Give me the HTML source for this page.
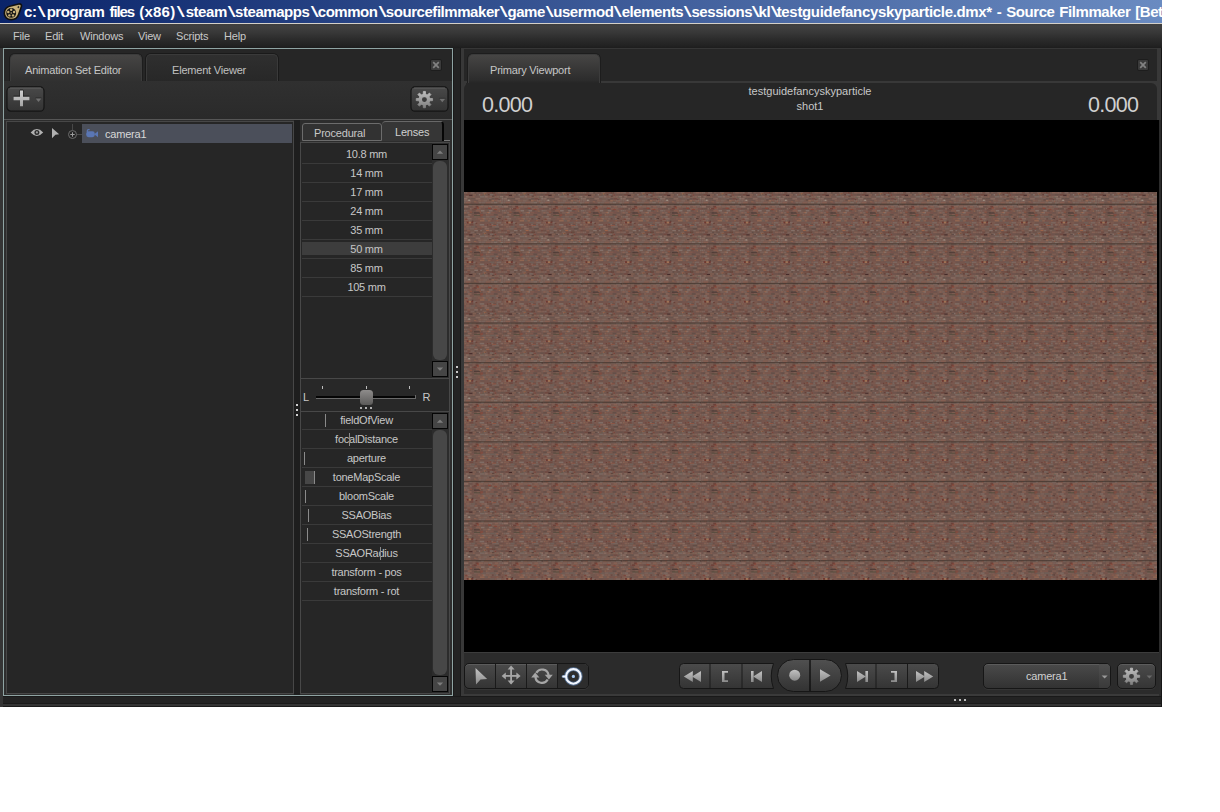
<!DOCTYPE html>
<html><head><meta charset="utf-8"><title>Source Filmmaker</title>
<style>
html,body{margin:0;padding:0;background:#fff;}
body{width:1220px;height:812px;position:relative;overflow:hidden;font-family:"Liberation Sans",sans-serif;font-size:11px;color:#c4c4c4;}
.abs{position:absolute;box-sizing:border-box;}
.bs{display:inline-block;font-weight:normal;transform:translateX(0.4px) scaleX(1.9);margin:0 2.5px 0 2.1px;}
#app{position:absolute;left:0;top:0;width:1162px;height:707px;background:#2b2b2b;overflow:hidden;}
.row{text-align:center;color:#c6c6c6;white-space:nowrap;letter-spacing:-0.25px;}
.t{position:absolute;white-space:nowrap;line-height:14px;letter-spacing:-0.2px;}
.btn{position:absolute;box-sizing:border-box;border:1px solid #161616;border-radius:4px;background:linear-gradient(#4b4b4b,#353535);box-shadow:0 1px 0 rgba(255,255,255,0.05),inset 0 1px 0 rgba(255,255,255,0.10);}
.sb{position:absolute;box-sizing:border-box;width:16px;height:16px;border:1px solid #050505;background:#454545;}
</style></head><body>
<div id="app">
<svg class="abs" style="left:0;top:0" width="1" height="1"><defs><linearGradient id="gg" gradientUnits="userSpaceOnUse" x1="0" y1="-8.500" x2="0" y2="8.500"><stop offset="0" stop-color="#c0c0c0"/><stop offset="1" stop-color="#7e7e7e"/></linearGradient></defs></svg>
<!-- title bar -->
<div class="abs" style="left:0;top:0;width:1162px;height:23px;background:linear-gradient(90deg,#0a246a 0px,#6a8bc1 1162px)"></div>
<div class="abs" id="title" style="left:24px;top:0;width:1138px;height:23px;overflow:hidden;white-space:nowrap;color:#fff;font-weight:bold;font-size:15px;line-height:23px;letter-spacing:-0.45px">c:<span class="bs" style="margin:0 3.5px 0 3px">\</span><span style="word-spacing:1.5px">program <span style="letter-spacing:-1.1px">files</span> </span><span style="letter-spacing:0.2px">(x86)</span><span class="bs" style="margin:0 3.5px 0 3.1px">\</span>steam<span class="bs">\</span>steamapps<span class="bs">\</span>common<span class="bs">\</span>sourcefilmmaker<span class="bs">\</span>game<span class="bs">\</span>usermod<span class="bs">\</span>elements<span class="bs">\</span>sessions<span class="bs" style="margin:0 1.4px">\</span>kl<span class="bs" style="margin:0 1.4px">\</span><span style="letter-spacing:-0.33px">testguidefancyskyparticle.dmx*</span><span style="letter-spacing:-0.45px;word-spacing:1.2px"> - Source Filmmaker [Beta]</span></div>
<svg class="abs" style="left:2.6px;top:3.2px" width="20.5" height="18.3" viewBox="0 0 19 17"><path d="M1.2 9.6C1.2 5.4 4.2 3.2 8 2.6L14.6 0.9C16.6 0.6 17.6 1.9 17 3.4L14.6 10.4C13.6 13.4 11 15.4 7.6 15.4C3.8 15.4 1.2 13 1.2 9.6Z" fill="#c9b27a" stroke="#111" stroke-width="1.5"/><circle cx="7.6" cy="9.2" r="4.6" fill="#151515"/><g fill="#c9b27a"><circle cx="7.6" cy="6.3" r="1.15"/><circle cx="10.3" cy="8.3" r="1.15"/><circle cx="9.3" cy="11.5" r="1.15"/><circle cx="5.9" cy="11.5" r="1.15"/><circle cx="4.9" cy="8.3" r="1.15"/><circle cx="7.6" cy="9.2" r="0.7"/></g><path d="M14.2 2.4l.5 1 .9.3-.9.4-.5 1-.4-1-1-.4 1-.3z" fill="#151515"/></svg>
<div class="abs" style="left:0;top:23px;width:1162px;height:1px;background:#d4d0c8"></div>
<!-- menu bar -->
<div class="abs" style="left:0;top:24px;width:1162px;height:24px;background:linear-gradient(#3e3e3e 0%,#404040 12%,#383838 35%,#2c2c2c 62%,#232323 88%,#1d1d1d 100%)"></div>
<div class="t" style="left:13px;top:29px;color:#c8c8c8">File</div>
<div class="t" style="left:45px;top:29px;color:#c8c8c8">Edit</div>
<div class="t" style="left:80px;top:29px;color:#c8c8c8">Windows</div>
<div class="t" style="left:138px;top:29px;color:#c8c8c8">View</div>
<div class="t" style="left:176px;top:29px;color:#c8c8c8">Scripts</div>
<div class="t" style="left:224px;top:29px;color:#c8c8c8">Help</div>
<!-- outer strips -->
<div class="abs" style="left:0;top:48px;width:3px;height:659px;background:#353535"></div>
<div class="abs" style="left:0;top:696px;width:1162px;height:11px;background:#232323"></div>
<div class="abs" style="left:0;top:696px;width:1162px;height:1px;background:#191919"></div>
<div class="abs" style="left:0;top:703px;width:1162px;height:1px;background:#1b1b1b"></div>
<div class="abs" style="left:0;top:704px;width:1162px;height:2px;background:#343434"></div>
<div class="abs" style="left:0;top:706px;width:1162px;height:1px;background:#1a1a1a"></div>
<div class="abs" style="left:0;top:696px;width:3px;height:11px;background:#353535"></div>
<div class="abs" style="left:954px;top:699px;width:2px;height:2px;background:#bdbdbd;box-shadow:5px 0 0 #bdbdbd,10px 0 0 #bdbdbd"></div>
<!-- gap between panels -->
<div class="abs" style="left:453px;top:48px;width:8px;height:648px;background:#232323;border-left:1px solid #191919;border-right:1px solid #191919"></div>
<div class="abs" style="left:456px;top:366px;width:2px;height:2px;background:#c8c8c8;box-shadow:0 5px 0 #c8c8c8,0 10px 0 #c8c8c8"></div>

<!-- LEFT PANEL -->
<div class="abs" id="lp" style="left:3px;top:48px;width:450px;height:648px;border:1px solid #8fa4a3;background:#2b2b2b"></div>
<div class="abs" style="left:4px;top:49px;width:448px;height:32px;background:#262626"></div>
<div class="abs" style="left:4px;top:119px;width:448px;height:1px;background:#565656"></div>
<div class="abs" style="left:4px;top:120px;width:448px;height:575px;background:#2d2d2d"></div>
<!-- tabs -->
<div class="abs" style="left:10px;top:54px;width:132px;height:29px;border-radius:5px 5px 0 0;background:linear-gradient(#464544,#2f2f2f);border:1px solid #3c3c3c;border-bottom:none;box-shadow:0 0 0 1px #1d1d1d"></div>
<div class="t" id="tab1" style="left:25px;top:63px;color:#c6c6c6">Animation Set Editor</div>
<div class="abs" style="left:146px;top:54px;width:132px;height:29px;border-radius:5px 5px 0 0;background:linear-gradient(#2f2f2f,#272727);border:1px solid #3a3a3a;border-bottom:none;box-shadow:0 0 0 1px #1a1a1a"></div>
<div class="t" id="tab2" style="left:172px;top:63px;color:#c0c0c0">Element Viewer</div>
<div class="abs" style="left:430px;top:59px;width:12px;height:12px;background:#3b3b3b;border:1px solid #1d1d1d;border-radius:2px"></div>
<svg class="abs" style="left:430px;top:59px" width="12" height="12"><path d="M3.2 3.2L8.8 8.8M8.8 3.2L3.2 8.800" stroke="#828282" stroke-width="1.700"/></svg>
<div class="abs" style="left:4px;top:81px;width:448px;height:38px;background:linear-gradient(#303030,#2a2a2a)"></div>
<!-- toolbar buttons -->
<svg class="abs" style="left:4px;top:82px" width="448" height="36" viewBox="4 82 448 36">
<defs><linearGradient id="tb" x1="0" y1="0" x2="0" y2="1"><stop offset="0" stop-color="#4d4d4d"/><stop offset="0.1" stop-color="#474747"/><stop offset="1" stop-color="#333"/></linearGradient>
<linearGradient id="pl" x1="0" y1="0" x2="0" y2="1"><stop offset="0" stop-color="#cfcfcf"/><stop offset="1" stop-color="#a4a4a4"/></linearGradient></defs>
<rect x="7" y="86.900" width="37" height="24.300" rx="4" fill="url(#tb)" stroke="#141414" stroke-width="1.200"/><path d="M10 88H41" stroke="#6a6a6a" stroke-width="0.9" opacity="0.8"/>
<path d="M13.600 96.200H20V90.100H23V96.200H29.400" fill="none" stroke="#1c1c1c" stroke-width="1"/>
<path d="M13.600 96.700H20V90.600H23V96.700H29.400V100.200H23V106.300H20V100.200H13.600Z" fill="url(#pl)"/>
<path d="M35.600 98H41.400" stroke="#222" stroke-width="0.800"/><path d="M35.700 98.400H41.300L38.500 101.900Z" fill="#707070"/>
<rect x="411" y="86.900" width="37" height="24.300" rx="4" fill="url(#tb)" stroke="#141414" stroke-width="1.200"/><path d="M414 88H445" stroke="#6a6a6a" stroke-width="0.9" opacity="0.8"/>
<g transform="translate(424.400,99.600)"><g fill="url(#gg)"><path fill-rule="evenodd" d="M0-5.9A5.9 5.9 0 1 0 0 5.9A5.9 5.9 0 1 0 0-5.9ZM0-2.4A2.4 2.4 0 1 1 0 2.4A2.4 2.4 0 1 1 0-2.400Z"/><path d="M-1.05 -8.15L1.05 -8.15L1.25 -4.60L-1.25 -4.60ZM5.02 -6.51L6.51 -5.02L4.14 -2.37L2.37 -4.14ZM8.15 -1.05L8.15 1.05L4.60 1.25L4.60 -1.25ZM6.51 5.02L5.02 6.51L2.37 4.14L4.14 2.37ZM1.05 8.15L-1.05 8.15L-1.25 4.60L1.25 4.60ZM-5.02 6.51L-6.51 5.02L-4.14 2.37L-2.37 4.14ZM-8.15 1.05L-8.15 -1.05L-4.60 -1.25L-4.60 1.25ZM-6.51 -5.02L-5.02 -6.51L-2.37 -4.14L-4.14 -2.37Z" stroke="url(#gg)" stroke-width="0.8" stroke-linejoin="round"/><circle r="2.4" fill="#3a3a3a" opacity="0.35"/></g></g>
<path d="M439.300 98.400H445.300" stroke="#222" stroke-width="0.800"/><path d="M439.400 98.800H445.200L442.300 102.200Z" fill="#707070"/>
</svg>
<!-- tree -->
<div class="abs" style="left:6px;top:121px;width:288px;height:573px;background:#262626;border:1px solid #474747"></div>
<div class="abs" style="left:82px;top:124px;width:210px;height:19px;background:#4b4f5a"></div>
<div class="t" id="cam1" style="left:105px;top:127px;color:#d8d8d8">camera1</div>
<svg class="abs" style="left:28px;top:124px" width="75" height="19">
<path d="M2.600 8.500Q8.900 1.700 15.200 8.500Q8.900 15.300 2.600 8.500Z" fill="#b2b2b2"/><circle cx="8.900" cy="8.400" r="2.500" fill="#2c2c2c"/><circle cx="8.900" cy="8.400" r="1.100" fill="#9c9c9c"/>
<path d="M24 4V14.200L27.400 10.800L31.200 10.300Z" fill="#b0b0b0"/>
<path d="M44.500 0V6M49 10.500H54" stroke="#484848" stroke-width="1"/><circle cx="44.500" cy="10.500" r="4" fill="#262626" stroke="#6c6c6c" stroke-width="1"/><path d="M42.300 10.500H46.700M44.500 8.300V12.700" stroke="#a0a0a0" stroke-width="1"/>
<rect x="58.200" y="7.300" width="8.600" height="5.900" rx="2.400" fill="#5a76b4"/><path d="M66.200 10.300L70 7.200V13.300Z" fill="#5a76b4"/><path d="M59.300 8V6.800Q59.300 5.600 60.500 5.600H61.600" fill="none" stroke="#5a76b4" stroke-width="1.200"/>
</svg>
<!-- splitter between tree and sub panel -->
<div class="abs" style="left:294px;top:120px;width:6px;height:575px;background:#1e1e1e"></div>
<div class="abs" style="left:296px;top:404px;width:2px;height:2px;background:#cfcfcf;box-shadow:0 5px 0 #cfcfcf,0 10px 0 #cfcfcf"></div>
<!-- sub panel -->
<div class="abs" style="left:300px;top:120px;width:150px;height:575px;background:#2d2d2d"></div>
<div class="abs" style="left:302px;top:123px;width:80px;height:18px;background:#323232;border:1px solid #6c6c6c;border-radius:3px 3px 0 0"></div>
<div class="abs" style="left:382px;top:121px;width:62px;height:20px;background:#363636;border-top:1px solid #686868;border-right:2px solid #060606;border-radius:4px 4px 0 0"></div>
<div class="abs" style="left:444px;top:140px;width:6px;height:1px;background:#777"></div>
<div class="t" id="proc" style="left:314px;top:126px;color:#c8c8c8">Procedural</div>
<div class="t" id="lens" style="left:395px;top:125px;color:#d0d0d0">Lenses</div>
<!-- lens list -->
<div class="abs" style="left:300px;top:142px;width:150px;height:237px;background:#262626;border:1px solid #484848"></div>
<div class="abs row" style="left:301px;top:144px;width:131px;height:19px;line-height:20px">10.8 mm</div><div class="abs" style="left:302px;top:163px;width:130px;height:1px;background:#3a3a3a"></div><div class="abs row" style="left:301px;top:163px;width:131px;height:19px;line-height:20px">14 mm</div><div class="abs" style="left:302px;top:182px;width:130px;height:1px;background:#3a3a3a"></div><div class="abs row" style="left:301px;top:182px;width:131px;height:19px;line-height:20px">17 mm</div><div class="abs" style="left:302px;top:201px;width:130px;height:1px;background:#3a3a3a"></div><div class="abs row" style="left:301px;top:201px;width:131px;height:19px;line-height:20px">24 mm</div><div class="abs" style="left:302px;top:220px;width:130px;height:1px;background:#3a3a3a"></div><div class="abs row" style="left:301px;top:220px;width:131px;height:19px;line-height:20px">35 mm</div><div class="abs" style="left:302px;top:239px;width:130px;height:1px;background:#3a3a3a"></div><div class="abs" style="left:302px;top:242px;width:130px;height:13px;background:#3d3d3d"></div><div class="abs row" style="left:301px;top:239px;width:131px;height:19px;line-height:20px">50 mm</div><div class="abs" style="left:302px;top:258px;width:130px;height:1px;background:#3a3a3a"></div><div class="abs row" style="left:301px;top:258px;width:131px;height:19px;line-height:20px">85 mm</div><div class="abs" style="left:302px;top:277px;width:130px;height:1px;background:#3a3a3a"></div><div class="abs row" style="left:301px;top:277px;width:131px;height:19px;line-height:20px">105 mm</div><div class="abs" style="left:302px;top:296px;width:130px;height:1px;background:#3a3a3a"></div>
<div class="abs" style="left:432px;top:143px;width:17px;height:235px;background:#2c2c2c"></div>
<div class="abs" style="left:433px;top:161px;width:14px;height:199px;background:#474747;border-radius:6px"></div>
<div class="sb" style="left:432px;top:144px"></div><svg class="abs" style="left:432px;top:144px" width="16" height="16"><path d="M4.800 9.800L8 6.600L11.200 9.800Z" fill="#7c7c7c"/></svg>
<div class="sb" style="left:432px;top:361px"></div><svg class="abs" style="left:432px;top:361px" width="16" height="16"><path d="M4.800 6.600L8 9.800L11.200 6.600Z" fill="#7c7c7c"/></svg>
<!-- slider -->
<div class="abs" style="left:300px;top:379px;width:150px;height:32px;background:#282828;border-left:1px solid #484848;border-right:1px solid #484848"></div>
<div class="t" style="left:303px;top:389.5px;color:#c8c8c8">L</div>
<div class="t" style="left:422.500px;top:389.5px;color:#c8c8c8">R</div>
<div class="abs" style="left:316px;top:396px;width:100px;height:2px;background:#050505"></div>
<div class="abs" style="left:316px;top:398px;width:100px;height:1px;background:#6a6a6a"></div>
<div class="abs" style="left:415px;top:395px;width:1px;height:4px;background:#6a6a6a"></div>
<div class="abs" style="left:322px;top:386px;width:1px;height:3px;background:#bdbdbd;box-shadow:44px 0 0 #bdbdbd,87px 0 0 #bdbdbd"></div>
<div class="abs" style="left:360px;top:390px;width:13px;height:15px;border-radius:3.500px;background:linear-gradient(#8e8c8b,#5c5b5a)"></div>
<div class="abs" style="left:360px;top:407px;width:2px;height:2px;background:#b0b0b0;box-shadow:5px 0 0 #b0b0b0,10px 0 0 #b0b0b0"></div>
<!-- control list -->
<div class="abs" style="left:300px;top:411px;width:150px;height:283px;background:#262626;border:1px solid #484848"></div>
<div class="abs row" style="left:301px;top:411px;width:131px;height:19px;line-height:19px">fieldOfView</div><div class="abs" style="left:325px;top:414px;width:1px;height:13px;background:#8a8a8a"></div><div class="abs" style="left:302px;top:429px;width:130px;height:1px;background:#3a3a3a"></div><div class="abs row" style="left:301px;top:430px;width:131px;height:19px;line-height:19px">focalDistance</div><div class="abs" style="left:348.5px;top:433px;width:1px;height:13px;background:#8a8a8a"></div><div class="abs" style="left:302px;top:448px;width:130px;height:1px;background:#3a3a3a"></div><div class="abs row" style="left:301px;top:449px;width:131px;height:19px;line-height:19px">aperture</div><div class="abs" style="left:304px;top:452px;width:1px;height:13px;background:#8a8a8a"></div><div class="abs" style="left:302px;top:467px;width:130px;height:1px;background:#3a3a3a"></div><div class="abs" style="left:305px;top:471px;width:9px;height:13px;background:#474747"></div><div class="abs row" style="left:301px;top:468px;width:131px;height:19px;line-height:19px">toneMapScale</div><div class="abs" style="left:314px;top:471px;width:1px;height:13px;background:#8a8a8a"></div><div class="abs" style="left:302px;top:486px;width:130px;height:1px;background:#3a3a3a"></div><div class="abs row" style="left:301px;top:487px;width:131px;height:19px;line-height:19px">bloomScale</div><div class="abs" style="left:305px;top:490px;width:1px;height:13px;background:#8a8a8a"></div><div class="abs" style="left:302px;top:505px;width:130px;height:1px;background:#3a3a3a"></div><div class="abs row" style="left:301px;top:506px;width:131px;height:19px;line-height:19px">SSAOBias</div><div class="abs" style="left:308px;top:509px;width:1px;height:13px;background:#8a8a8a"></div><div class="abs" style="left:302px;top:524px;width:130px;height:1px;background:#3a3a3a"></div><div class="abs row" style="left:301px;top:525px;width:131px;height:19px;line-height:19px">SSAOStrength</div><div class="abs" style="left:307px;top:528px;width:1px;height:13px;background:#8a8a8a"></div><div class="abs" style="left:302px;top:543px;width:130px;height:1px;background:#3a3a3a"></div><div class="abs row" style="left:301px;top:544px;width:131px;height:19px;line-height:19px">SSAORadius</div><div class="abs" style="left:380px;top:547px;width:1px;height:13px;background:#8a8a8a"></div><div class="abs" style="left:302px;top:562px;width:130px;height:1px;background:#3a3a3a"></div><div class="abs row" style="left:301px;top:563px;width:131px;height:19px;line-height:19px">transform - pos</div><div class="abs" style="left:302px;top:581px;width:130px;height:1px;background:#3a3a3a"></div><div class="abs row" style="left:301px;top:582px;width:131px;height:19px;line-height:19px">transform - rot</div><div class="abs" style="left:302px;top:600px;width:130px;height:1px;background:#3a3a3a"></div>
<div class="abs" style="left:432px;top:412px;width:17px;height:281px;background:#2c2c2c"></div>
<div class="abs" style="left:433px;top:430px;width:14px;height:245px;background:#474747;border-radius:6px"></div>
<div class="sb" style="left:432px;top:413px"></div><svg class="abs" style="left:432px;top:413px" width="16" height="16"><path d="M4.800 9.800L8 6.600L11.200 9.800Z" fill="#7c7c7c"/></svg>
<div class="sb" style="left:432px;top:676px"></div><svg class="abs" style="left:432px;top:676px" width="16" height="16"><path d="M4.800 6.600L8 9.800L11.200 6.600Z" fill="#7c7c7c"/></svg>

<!-- RIGHT PANEL -->
<div class="abs" style="left:461px;top:48px;width:701px;height:648px;background:#262626"></div>
<div class="abs" style="left:461px;top:48px;width:3px;height:648px;background:#383838"></div>
<div class="abs" style="left:461px;top:48px;width:701px;height:1px;background:#363636"></div>
<div class="abs" style="left:1157px;top:48px;width:5px;height:648px;background:#2c2c2c"></div>
<div class="abs" style="left:1157px;top:48px;width:4px;height:72px;background:#383838"></div>
<div class="abs" style="left:1161px;top:48px;width:1px;height:659px;background:#161616"></div>
<div class="abs" style="left:461px;top:694px;width:698px;height:2px;background:#3a3a3a"></div>
<!-- tab -->
<div class="abs" style="left:1137px;top:59px;width:12px;height:12px;background:#3b3b3b;border:1px solid #1d1d1d;border-radius:2px"></div>
<svg class="abs" style="left:1137px;top:59px" width="12" height="12"><path d="M3.2 3.2L8.8 8.8M8.8 3.2L3.2 8.800" stroke="#828282" stroke-width="1.700"/></svg>
<div class="abs" style="left:464px;top:81px;width:693px;height:9px;background:#383838"></div>
<div class="abs" style="left:464px;top:83px;width:693px;height:37px;background:#262626;border-radius:6px 6px 0 0"></div>
<div class="abs" style="left:468px;top:54px;width:132px;height:29px;border-radius:5px 5px 0 0;background:linear-gradient(#464544,#2c2c2c 90%,#262626);border:1px solid #3c3c3c;border-bottom:none;box-shadow:0 0 0 1px #1d1d1d"></div>
<div class="abs" style="left:466px;top:83px;width:136px;height:2px;background:#262626"></div>
<div class="t" id="pv" style="left:490px;top:63px;color:#c6c6c6">Primary Viewport</div>
<div class="t" id="tc1" style="left:482px;top:93px;font-size:21.5px;line-height:24px;color:#d0d0d0;letter-spacing:-0.7px">0.000</div>
<div class="t" id="tc2" style="left:1088px;top:93px;font-size:21.5px;line-height:24px;color:#d0d0d0;letter-spacing:-0.7px">0.000</div>
<div class="t" id="sh1" style="left:710px;width:200px;text-align:center;top:84px;color:#c8c8c8;letter-spacing:0">testguidefancyskyparticle</div>
<div class="t" id="sh2" style="left:710px;width:200px;text-align:center;top:99px;color:#c8c8c8;letter-spacing:0">shot1</div>
<!-- viewport -->
<div class="abs" style="left:464px;top:120px;width:695px;height:532px;background:#000"></div>
<svg class="abs" style="left:464px;top:192px" width="693" height="388" viewBox="0 0 693 388">
<defs><g id="bt"><rect x="0" y="0" width="39.800000000000004" height="39.800000000000004" fill="#74584f"/><rect x="0.0" y="0.0" width="1.3" height="1.5" fill="#94766a" opacity="0.35"/><rect x="1.7" y="0.0" width="1.6" height="1.5" fill="#897870" opacity="0.35"/><rect x="3.7" y="0.0" width="2.6" height="1.5" fill="#6a3a32" opacity="0.35"/><rect x="6.7" y="0.0" width="3.6" height="1.5" fill="#84746e" opacity="0.35"/><rect x="10.7" y="0.0" width="1.6" height="1.5" fill="#5a4943" opacity="0.75"/><rect x="12.7" y="0.0" width="1.6" height="1.5" fill="#6e584f" opacity="0.35"/><rect x="14.7" y="0.0" width="3.6" height="1.5" fill="#5a4943" opacity="0.35"/><rect x="18.7" y="0.0" width="3.6" height="1.5" fill="#7e675e" opacity="0.5"/><rect x="22.7" y="0.0" width="4.6" height="1.5" fill="#6a3a32" opacity="0.35"/><rect x="27.7" y="0.0" width="3.6" height="1.5" fill="#6a3a32" opacity="0.75"/><rect x="31.7" y="0.0" width="1.6" height="1.5" fill="#6e584f" opacity="0.35"/><rect x="33.7" y="0.0" width="3.6" height="1.5" fill="#8e6657" opacity="0.6"/><rect x="37.7" y="0.0" width="1.9" height="1.5" fill="#8e6657" opacity="0.35"/><rect x="0.0" y="2.0" width="1.3" height="1.5" fill="#5d433d" opacity="0.35"/><rect x="1.7" y="2.0" width="3.6" height="1.5" fill="#6a3a32" opacity="0.5"/><rect x="5.7" y="2.0" width="2.6" height="1.5" fill="#7e675e" opacity="0.35"/><rect x="8.7" y="2.0" width="3.6" height="1.5" fill="#876354" opacity="0.5"/><rect x="12.7" y="2.0" width="3.6" height="1.5" fill="#897870" opacity="0.75"/><rect x="16.7" y="2.0" width="2.6" height="1.5" fill="#7e574b" opacity="0.75"/><rect x="19.7" y="2.0" width="2.6" height="1.5" fill="#7a6c66" opacity="0.5"/><rect x="22.7" y="2.0" width="2.6" height="1.5" fill="#6e584f" opacity="0.35"/><rect x="25.7" y="2.0" width="3.6" height="1.5" fill="#7a6c66" opacity="0.75"/><rect x="29.7" y="2.0" width="2.6" height="1.5" fill="#7e574b" opacity="0.6"/><rect x="32.7" y="2.0" width="3.6" height="1.5" fill="#684e47" opacity="0.35"/><rect x="36.7" y="2.0" width="2.9" height="1.5" fill="#5a4943" opacity="0.5"/><rect x="0.0" y="4.0" width="1.6" height="1.5" fill="#684e47" opacity="0.6"/><rect x="2.0" y="4.0" width="2.6" height="1.5" fill="#876c60" opacity="0.75"/><rect x="5.0" y="4.0" width="3.6" height="1.5" fill="#7e574b" opacity="0.35"/><rect x="9.0" y="4.0" width="1.6" height="1.5" fill="#8a5c4d" opacity="0.75"/><rect x="11.0" y="4.0" width="4.6" height="1.5" fill="#684e47" opacity="0.35"/><rect x="16.0" y="4.0" width="4.6" height="1.5" fill="#7a6c66" opacity="0.75"/><rect x="21.0" y="4.0" width="2.6" height="1.5" fill="#94766a" opacity="0.6"/><rect x="24.0" y="4.0" width="1.6" height="1.5" fill="#7e574b" opacity="0.6"/><rect x="26.0" y="4.0" width="2.6" height="1.5" fill="#9a6a52" opacity="0.35"/><rect x="29.0" y="4.0" width="3.6" height="1.5" fill="#876354" opacity="0.5"/><rect x="33.0" y="4.0" width="2.6" height="1.5" fill="#8e6657" opacity="0.5"/><rect x="36.0" y="4.0" width="3.6" height="1.5" fill="#94766a" opacity="0.75"/><rect x="0.0" y="6.0" width="3.3" height="1.5" fill="#94766a" opacity="0.6"/><rect x="3.7" y="6.0" width="2.6" height="1.5" fill="#5a4943" opacity="0.6"/><rect x="6.7" y="6.0" width="4.6" height="1.5" fill="#5a4943" opacity="0.6"/><rect x="11.7" y="6.0" width="4.6" height="1.5" fill="#94766a" opacity="0.5"/><rect x="16.7" y="6.0" width="2.6" height="1.5" fill="#684e47" opacity="0.5"/><rect x="19.7" y="6.0" width="2.6" height="1.5" fill="#6e584f" opacity="0.5"/><rect x="22.7" y="6.0" width="1.6" height="1.5" fill="#6c615b" opacity="0.5"/><rect x="24.7" y="6.0" width="2.6" height="1.5" fill="#7a6c66" opacity="0.35"/><rect x="27.7" y="6.0" width="2.6" height="1.5" fill="#5a4943" opacity="0.6"/><rect x="30.7" y="6.0" width="3.6" height="1.5" fill="#6a3a32" opacity="0.6"/><rect x="34.7" y="6.0" width="2.6" height="1.5" fill="#784f47" opacity="0.35"/><rect x="37.7" y="6.0" width="1.9" height="1.5" fill="#897870" opacity="0.75"/><rect x="0.0" y="8.0" width="2.0" height="1.5" fill="#7e675e" opacity="0.75"/><rect x="2.4" y="8.0" width="4.6" height="1.5" fill="#94766a" opacity="0.35"/><rect x="7.4" y="8.0" width="2.6" height="1.5" fill="#684e47" opacity="0.5"/><rect x="10.4" y="8.0" width="3.6" height="1.5" fill="#5d433d" opacity="0.35"/><rect x="14.4" y="8.0" width="2.6" height="1.5" fill="#9a6a52" opacity="0.35"/><rect x="17.4" y="8.0" width="1.6" height="1.5" fill="#82584c" opacity="0.5"/><rect x="19.4" y="8.0" width="3.6" height="1.5" fill="#7e675e" opacity="0.6"/><rect x="23.4" y="8.0" width="3.6" height="1.5" fill="#82584c" opacity="0.35"/><rect x="27.4" y="8.0" width="2.6" height="1.5" fill="#9a6a52" opacity="0.75"/><rect x="30.4" y="8.0" width="2.6" height="1.5" fill="#8a5c4d" opacity="0.6"/><rect x="33.4" y="8.0" width="3.6" height="1.5" fill="#876c60" opacity="0.75"/><rect x="37.4" y="8.0" width="1.6" height="1.5" fill="#7e675e" opacity="0.75"/><rect x="0.0" y="10.0" width="1.4" height="1.5" fill="#7e675e" opacity="0.6"/><rect x="1.8" y="10.0" width="4.6" height="1.5" fill="#8a5c4d" opacity="0.75"/><rect x="6.8" y="10.0" width="4.6" height="1.5" fill="#5d433d" opacity="0.35"/><rect x="11.8" y="10.0" width="2.6" height="1.5" fill="#784f47" opacity="0.6"/><rect x="14.8" y="10.0" width="2.6" height="1.5" fill="#897870" opacity="0.35"/><rect x="17.8" y="10.0" width="3.6" height="1.5" fill="#7a6c66" opacity="0.35"/><rect x="21.8" y="10.0" width="4.6" height="1.5" fill="#8a5c4d" opacity="0.6"/><rect x="26.8" y="10.0" width="2.6" height="1.5" fill="#876c60" opacity="0.5"/><rect x="29.8" y="10.0" width="3.6" height="1.5" fill="#897870" opacity="0.6"/><rect x="33.8" y="10.0" width="4.6" height="1.5" fill="#6e584f" opacity="0.5"/><rect x="38.8" y="10.0" width="0.8" height="1.5" fill="#94766a" opacity="0.5"/><rect x="0.0" y="12.0" width="2.8" height="1.5" fill="#876c60" opacity="0.35"/><rect x="3.2" y="12.0" width="1.6" height="1.5" fill="#8a5c4d" opacity="0.75"/><rect x="5.2" y="12.0" width="2.6" height="1.5" fill="#84746e" opacity="0.6"/><rect x="8.2" y="12.0" width="3.6" height="1.5" fill="#876c60" opacity="0.6"/><rect x="12.2" y="12.0" width="1.6" height="1.5" fill="#6e584f" opacity="0.35"/><rect x="14.2" y="12.0" width="2.6" height="1.5" fill="#6c615b" opacity="0.5"/><rect x="17.2" y="12.0" width="2.6" height="1.5" fill="#84746e" opacity="0.75"/><rect x="20.2" y="12.0" width="3.6" height="1.5" fill="#9a6a52" opacity="0.35"/><rect x="24.2" y="12.0" width="3.6" height="1.5" fill="#876c60" opacity="0.35"/><rect x="28.2" y="12.0" width="4.6" height="1.5" fill="#7e675e" opacity="0.75"/><rect x="33.2" y="12.0" width="4.6" height="1.5" fill="#84746e" opacity="0.75"/><rect x="38.2" y="12.0" width="1.4" height="1.5" fill="#5a4943" opacity="0.6"/><rect x="0.0" y="14.0" width="4.3" height="1.5" fill="#94766a" opacity="0.75"/><rect x="4.7" y="14.0" width="3.6" height="1.5" fill="#684e47" opacity="0.5"/><rect x="8.7" y="14.0" width="2.6" height="1.5" fill="#8e6657" opacity="0.35"/><rect x="11.7" y="14.0" width="2.6" height="1.5" fill="#6a3a32" opacity="0.75"/><rect x="14.7" y="14.0" width="4.6" height="1.5" fill="#8e6657" opacity="0.75"/><rect x="19.7" y="14.0" width="4.6" height="1.5" fill="#876c60" opacity="0.5"/><rect x="24.7" y="14.0" width="3.6" height="1.5" fill="#897870" opacity="0.5"/><rect x="28.7" y="14.0" width="1.6" height="1.5" fill="#82584c" opacity="0.35"/><rect x="30.7" y="14.0" width="3.6" height="1.5" fill="#8e6657" opacity="0.75"/><rect x="34.7" y="14.0" width="2.6" height="1.5" fill="#84746e" opacity="0.35"/><rect x="37.7" y="14.0" width="1.9" height="1.5" fill="#84746e" opacity="0.6"/><rect x="0.0" y="16.0" width="1.6" height="1.5" fill="#654740" opacity="0.6"/><rect x="2.0" y="16.0" width="3.6" height="1.5" fill="#5a4943" opacity="0.5"/><rect x="6.0" y="16.0" width="1.6" height="1.5" fill="#876c60" opacity="0.75"/><rect x="8.0" y="16.0" width="4.6" height="1.5" fill="#6a3a32" opacity="0.75"/><rect x="13.0" y="16.0" width="3.6" height="1.5" fill="#8e6657" opacity="0.5"/><rect x="17.0" y="16.0" width="3.6" height="1.5" fill="#784f47" opacity="0.35"/><rect x="21.0" y="16.0" width="3.6" height="1.5" fill="#5d433d" opacity="0.35"/><rect x="25.0" y="16.0" width="2.6" height="1.5" fill="#5d433d" opacity="0.5"/><rect x="28.0" y="16.0" width="3.6" height="1.5" fill="#9a6a52" opacity="0.35"/><rect x="32.0" y="16.0" width="3.6" height="1.5" fill="#876354" opacity="0.6"/><rect x="36.0" y="16.0" width="3.6" height="1.5" fill="#784f47" opacity="0.75"/><rect x="0.0" y="18.0" width="1.5" height="1.5" fill="#84746e" opacity="0.6"/><rect x="1.9" y="18.0" width="1.6" height="1.5" fill="#7e675e" opacity="0.75"/><rect x="3.9" y="18.0" width="3.6" height="1.5" fill="#82584c" opacity="0.35"/><rect x="7.9" y="18.0" width="3.6" height="1.5" fill="#654740" opacity="0.5"/><rect x="11.9" y="18.0" width="4.6" height="1.5" fill="#8a5c4d" opacity="0.75"/><rect x="16.9" y="18.0" width="3.6" height="1.5" fill="#897870" opacity="0.75"/><rect x="20.9" y="18.0" width="3.6" height="1.5" fill="#6e584f" opacity="0.6"/><rect x="24.9" y="18.0" width="3.6" height="1.5" fill="#84746e" opacity="0.75"/><rect x="28.9" y="18.0" width="2.6" height="1.5" fill="#5a4943" opacity="0.35"/><rect x="31.9" y="18.0" width="3.6" height="1.5" fill="#7e574b" opacity="0.6"/><rect x="35.9" y="18.0" width="1.6" height="1.5" fill="#6e584f" opacity="0.75"/><rect x="37.9" y="18.0" width="1.6" height="1.5" fill="#84746e" opacity="0.6"/><rect x="0.0" y="20.0" width="2.5" height="1.5" fill="#8e6657" opacity="0.75"/><rect x="2.9" y="20.0" width="2.6" height="1.5" fill="#7e675e" opacity="0.75"/><rect x="5.9" y="20.0" width="3.6" height="1.5" fill="#5d433d" opacity="0.5"/><rect x="9.9" y="20.0" width="2.6" height="1.5" fill="#5a4943" opacity="0.75"/><rect x="12.9" y="20.0" width="2.6" height="1.5" fill="#5a4943" opacity="0.5"/><rect x="15.9" y="20.0" width="2.6" height="1.5" fill="#654740" opacity="0.35"/><rect x="18.9" y="20.0" width="4.6" height="1.5" fill="#876c60" opacity="0.35"/><rect x="23.9" y="20.0" width="2.6" height="1.5" fill="#897870" opacity="0.75"/><rect x="26.9" y="20.0" width="3.6" height="1.5" fill="#82584c" opacity="0.75"/><rect x="30.9" y="20.0" width="2.6" height="1.5" fill="#784f47" opacity="0.6"/><rect x="33.9" y="20.0" width="3.6" height="1.5" fill="#684e47" opacity="0.35"/><rect x="37.9" y="20.0" width="1.7" height="1.5" fill="#7e675e" opacity="0.35"/><rect x="0.0" y="22.0" width="0.5" height="1.5" fill="#5d433d" opacity="0.6"/><rect x="0.9" y="22.0" width="2.6" height="1.5" fill="#5a4943" opacity="0.6"/><rect x="3.9" y="22.0" width="3.6" height="1.5" fill="#8e6657" opacity="0.75"/><rect x="7.9" y="22.0" width="4.6" height="1.5" fill="#654740" opacity="0.35"/><rect x="12.9" y="22.0" width="2.6" height="1.5" fill="#876354" opacity="0.5"/><rect x="15.9" y="22.0" width="3.6" height="1.5" fill="#684e47" opacity="0.6"/><rect x="19.9" y="22.0" width="1.6" height="1.5" fill="#684e47" opacity="0.6"/><rect x="21.9" y="22.0" width="1.6" height="1.5" fill="#9a6a52" opacity="0.5"/><rect x="23.9" y="22.0" width="1.6" height="1.5" fill="#8a5c4d" opacity="0.35"/><rect x="25.9" y="22.0" width="3.6" height="1.5" fill="#82584c" opacity="0.6"/><rect x="29.9" y="22.0" width="3.6" height="1.5" fill="#5a4943" opacity="0.6"/><rect x="33.9" y="22.0" width="3.6" height="1.5" fill="#8e6657" opacity="0.35"/><rect x="37.9" y="22.0" width="1.7" height="1.5" fill="#6e584f" opacity="0.35"/><rect x="0.0" y="24.0" width="1.7" height="1.5" fill="#7a6c66" opacity="0.6"/><rect x="2.1" y="24.0" width="3.6" height="1.5" fill="#84746e" opacity="0.6"/><rect x="6.1" y="24.0" width="3.6" height="1.5" fill="#784f47" opacity="0.5"/><rect x="10.1" y="24.0" width="2.6" height="1.5" fill="#876c60" opacity="0.35"/><rect x="13.1" y="24.0" width="2.6" height="1.5" fill="#876354" opacity="0.35"/><rect x="16.1" y="24.0" width="1.6" height="1.5" fill="#784f47" opacity="0.5"/><rect x="18.1" y="24.0" width="3.6" height="1.5" fill="#6c615b" opacity="0.5"/><rect x="22.1" y="24.0" width="3.6" height="1.5" fill="#7e675e" opacity="0.75"/><rect x="26.1" y="24.0" width="4.6" height="1.5" fill="#6c615b" opacity="0.75"/><rect x="31.1" y="24.0" width="3.6" height="1.5" fill="#7a6c66" opacity="0.5"/><rect x="35.1" y="24.0" width="2.6" height="1.5" fill="#654740" opacity="0.5"/><rect x="38.1" y="24.0" width="1.5" height="1.5" fill="#8e6657" opacity="0.75"/><rect x="0.0" y="26.0" width="2.6" height="1.5" fill="#876354" opacity="0.35"/><rect x="3.0" y="26.0" width="4.6" height="1.5" fill="#94766a" opacity="0.6"/><rect x="8.0" y="26.0" width="3.6" height="1.5" fill="#6e584f" opacity="0.6"/><rect x="12.0" y="26.0" width="1.6" height="1.5" fill="#7e574b" opacity="0.5"/><rect x="14.0" y="26.0" width="2.6" height="1.5" fill="#8a5c4d" opacity="0.75"/><rect x="17.0" y="26.0" width="1.6" height="1.5" fill="#8a5c4d" opacity="0.6"/><rect x="19.0" y="26.0" width="2.6" height="1.5" fill="#897870" opacity="0.6"/><rect x="22.0" y="26.0" width="2.6" height="1.5" fill="#876354" opacity="0.6"/><rect x="25.0" y="26.0" width="2.6" height="1.5" fill="#876c60" opacity="0.5"/><rect x="28.0" y="26.0" width="1.6" height="1.5" fill="#654740" opacity="0.75"/><rect x="30.0" y="26.0" width="1.6" height="1.5" fill="#6c615b" opacity="0.6"/><rect x="32.0" y="26.0" width="3.6" height="1.5" fill="#84746e" opacity="0.5"/><rect x="36.0" y="26.0" width="3.6" height="1.5" fill="#82584c" opacity="0.35"/><rect x="0.0" y="28.0" width="0.5" height="1.5" fill="#8e6657" opacity="0.75"/><rect x="0.9" y="28.0" width="3.6" height="1.5" fill="#876354" opacity="0.75"/><rect x="4.9" y="28.0" width="1.6" height="1.5" fill="#7a6c66" opacity="0.6"/><rect x="6.9" y="28.0" width="4.6" height="1.5" fill="#6e584f" opacity="0.35"/><rect x="11.9" y="28.0" width="3.6" height="1.5" fill="#784f47" opacity="0.5"/><rect x="15.9" y="28.0" width="4.6" height="1.5" fill="#9a6a52" opacity="0.75"/><rect x="20.9" y="28.0" width="2.6" height="1.5" fill="#6c615b" opacity="0.5"/><rect x="23.9" y="28.0" width="2.6" height="1.5" fill="#9a6a52" opacity="0.5"/><rect x="26.9" y="28.0" width="1.6" height="1.5" fill="#784f47" opacity="0.75"/><rect x="28.9" y="28.0" width="4.6" height="1.5" fill="#784f47" opacity="0.5"/><rect x="33.9" y="28.0" width="3.6" height="1.5" fill="#784f47" opacity="0.35"/><rect x="37.9" y="28.0" width="1.7" height="1.5" fill="#6a3a32" opacity="0.5"/><rect x="0.0" y="30.0" width="1.3" height="1.5" fill="#8e6657" opacity="0.6"/><rect x="1.7" y="30.0" width="1.6" height="1.5" fill="#94766a" opacity="0.75"/><rect x="3.7" y="30.0" width="3.6" height="1.5" fill="#876354" opacity="0.35"/><rect x="7.7" y="30.0" width="4.6" height="1.5" fill="#897870" opacity="0.5"/><rect x="12.7" y="30.0" width="3.6" height="1.5" fill="#8a5c4d" opacity="0.35"/><rect x="16.7" y="30.0" width="3.6" height="1.5" fill="#684e47" opacity="0.35"/><rect x="20.7" y="30.0" width="4.6" height="1.5" fill="#784f47" opacity="0.35"/><rect x="25.7" y="30.0" width="4.6" height="1.5" fill="#6c615b" opacity="0.6"/><rect x="30.7" y="30.0" width="1.6" height="1.5" fill="#8a5c4d" opacity="0.5"/><rect x="32.7" y="30.0" width="4.6" height="1.5" fill="#84746e" opacity="0.5"/><rect x="37.7" y="30.0" width="1.9" height="1.5" fill="#7e574b" opacity="0.75"/><rect x="0.6" y="32.0" width="1.6" height="1.5" fill="#9a6a52" opacity="0.5"/><rect x="2.6" y="32.0" width="2.6" height="1.5" fill="#8a5c4d" opacity="0.6"/><rect x="5.6" y="32.0" width="3.6" height="1.5" fill="#6a3a32" opacity="0.5"/><rect x="9.6" y="32.0" width="1.6" height="1.5" fill="#6c615b" opacity="0.35"/><rect x="11.6" y="32.0" width="3.6" height="1.5" fill="#8a5c4d" opacity="0.35"/><rect x="15.6" y="32.0" width="4.6" height="1.5" fill="#84746e" opacity="0.75"/><rect x="20.6" y="32.0" width="2.6" height="1.5" fill="#784f47" opacity="0.6"/><rect x="23.6" y="32.0" width="3.6" height="1.5" fill="#7e574b" opacity="0.75"/><rect x="27.6" y="32.0" width="1.6" height="1.5" fill="#897870" opacity="0.5"/><rect x="29.6" y="32.0" width="2.6" height="1.5" fill="#684e47" opacity="0.75"/><rect x="32.6" y="32.0" width="1.6" height="1.5" fill="#7a6c66" opacity="0.75"/><rect x="34.6" y="32.0" width="1.6" height="1.5" fill="#784f47" opacity="0.75"/><rect x="36.6" y="32.0" width="2.6" height="1.5" fill="#94766a" opacity="0.5"/><rect x="0.0" y="34.0" width="1.9" height="1.5" fill="#784f47" opacity="0.6"/><rect x="2.3" y="34.0" width="2.6" height="1.5" fill="#8e6657" opacity="0.6"/><rect x="5.3" y="34.0" width="1.6" height="1.5" fill="#876c60" opacity="0.5"/><rect x="7.3" y="34.0" width="3.6" height="1.5" fill="#6c615b" opacity="0.75"/><rect x="11.3" y="34.0" width="1.6" height="1.5" fill="#5d433d" opacity="0.35"/><rect x="13.3" y="34.0" width="3.6" height="1.5" fill="#7e574b" opacity="0.75"/><rect x="17.3" y="34.0" width="2.6" height="1.5" fill="#8e6657" opacity="0.75"/><rect x="20.3" y="34.0" width="2.6" height="1.5" fill="#94766a" opacity="0.6"/><rect x="23.3" y="34.0" width="1.6" height="1.5" fill="#654740" opacity="0.35"/><rect x="25.3" y="34.0" width="2.6" height="1.5" fill="#654740" opacity="0.75"/><rect x="28.3" y="34.0" width="1.6" height="1.5" fill="#84746e" opacity="0.35"/><rect x="30.3" y="34.0" width="4.6" height="1.5" fill="#7a6c66" opacity="0.6"/><rect x="35.3" y="34.0" width="2.6" height="1.5" fill="#684e47" opacity="0.75"/><rect x="38.3" y="34.0" width="1.3" height="1.5" fill="#6a3a32" opacity="0.35"/><rect x="0.0" y="36.0" width="2.2" height="1.5" fill="#8a5c4d" opacity="0.35"/><rect x="2.6" y="36.0" width="2.6" height="1.5" fill="#7e675e" opacity="0.35"/><rect x="5.6" y="36.0" width="4.6" height="1.5" fill="#7a6c66" opacity="0.5"/><rect x="10.6" y="36.0" width="2.6" height="1.5" fill="#8a5c4d" opacity="0.75"/><rect x="13.6" y="36.0" width="3.6" height="1.5" fill="#654740" opacity="0.5"/><rect x="17.6" y="36.0" width="2.6" height="1.5" fill="#5a4943" opacity="0.35"/><rect x="20.6" y="36.0" width="4.6" height="1.5" fill="#94766a" opacity="0.5"/><rect x="25.6" y="36.0" width="4.6" height="1.5" fill="#684e47" opacity="0.35"/><rect x="30.6" y="36.0" width="4.6" height="1.5" fill="#5a4943" opacity="0.75"/><rect x="35.6" y="36.0" width="3.6" height="1.5" fill="#8e6657" opacity="0.6"/><rect x="0.0" y="38.0" width="2.9" height="1.5" fill="#654740" opacity="0.6"/><rect x="3.3" y="38.0" width="2.6" height="1.5" fill="#8a5c4d" opacity="0.6"/><rect x="6.3" y="38.0" width="3.6" height="1.5" fill="#6e584f" opacity="0.6"/><rect x="10.3" y="38.0" width="3.6" height="1.5" fill="#897870" opacity="0.75"/><rect x="14.3" y="38.0" width="1.6" height="1.5" fill="#5d433d" opacity="0.5"/><rect x="16.3" y="38.0" width="1.6" height="1.5" fill="#84746e" opacity="0.75"/><rect x="18.3" y="38.0" width="3.6" height="1.5" fill="#6e584f" opacity="0.75"/><rect x="22.3" y="38.0" width="2.6" height="1.5" fill="#7e574b" opacity="0.75"/><rect x="25.3" y="38.0" width="2.6" height="1.5" fill="#897870" opacity="0.5"/><rect x="28.3" y="38.0" width="2.6" height="1.5" fill="#684e47" opacity="0.5"/><rect x="31.3" y="38.0" width="2.6" height="1.5" fill="#897870" opacity="0.35"/><rect x="34.3" y="38.0" width="2.6" height="1.5" fill="#6e584f" opacity="0.6"/><rect x="37.3" y="38.0" width="2.3" height="1.5" fill="#6a3a32" opacity="0.5"/><rect x="32.5" y="28.2" width="1.8" height="1.1" fill="#a86848" opacity="0.5"/><rect x="15.1" y="19.7" width="1.8" height="1.1" fill="#a86848" opacity="0.5"/><rect x="12.4" y="2.3" width="2.4" height="1.1" fill="#3e2826" opacity="0.5"/><rect x="35.4" y="4.7" width="2.4" height="1.1" fill="#586050" opacity="0.5"/><rect x="23.0" y="32.4" width="1.2" height="1.1" fill="#5a2822" opacity="0.5"/><rect x="9.9" y="9.3" width="2.4" height="1.1" fill="#a86848" opacity="0.5"/><rect x="16.3" y="35.9" width="1.2" height="1.1" fill="#9a3f2f" opacity="0.5"/><rect x="1.2" y="26.7" width="2.4" height="1.1" fill="#7a2e26" opacity="0.5"/><rect x="17.9" y="2.7" width="1.8" height="1.1" fill="#586050" opacity="0.5"/><rect x="35.6" y="9.3" width="1.2" height="1.1" fill="#a8583c" opacity="0.5"/><rect x="5.7" y="19.6" width="2.4" height="1.1" fill="#a8583c" opacity="0.5"/><rect x="25.7" y="31.8" width="1.2" height="1.1" fill="#7a2e26" opacity="0.5"/><rect x="20.2" y="1.5" width="1.2" height="1.1" fill="#b07852" opacity="0.5"/><rect x="20.8" y="1.4" width="1.2" height="1.1" fill="#3e2826" opacity="0.5"/><rect x="22.9" y="19.9" width="2.4" height="1.1" fill="#a86848" opacity="0.5"/><rect x="28.0" y="3.7" width="2.4" height="1.1" fill="#3e2826" opacity="0.5"/><rect x="34.5" y="7.2" width="1.2" height="1.1" fill="#3e2826" opacity="0.5"/><rect x="28.9" y="0.0" width="1.8" height="1.1" fill="#586050" opacity="0.5"/><rect x="36.5" y="10.5" width="2.4" height="1.1" fill="#94897f" opacity="0.5"/><rect x="30.7" y="9.1" width="1.2" height="1.1" fill="#586050" opacity="0.5"/><rect x="20.0" y="1.1" width="2.4" height="1.1" fill="#a86848" opacity="0.5"/><rect x="23.8" y="2.1" width="1.8" height="1.1" fill="#5a2822" opacity="0.5"/><rect x="32.4" y="24.3" width="1.8" height="1.1" fill="#a8583c" opacity="0.5"/><rect x="8.3" y="16.0" width="1.2" height="1.1" fill="#94897f" opacity="0.5"/><rect x="18.0" y="26.2" width="1.8" height="1.1" fill="#a86848" opacity="0.5"/><rect x="25.0" y="7.4" width="2.4" height="1.1" fill="#3e2826" opacity="0.5"/><rect x="30.9" y="2.5" width="1.2" height="1.1" fill="#7a2e26" opacity="0.5"/><rect x="11.4" y="30.8" width="1.8" height="1.1" fill="#5a2822" opacity="0.5"/><rect x="8.1" y="28.6" width="1.2" height="1.1" fill="#3e2826" opacity="0.5"/><rect x="34.8" y="18.6" width="1.2" height="1.1" fill="#b07852" opacity="0.5"/><rect x="0" y="4" width="39.800000000000004" height="7.6" fill="#8c847c" opacity="0.09"/><rect x="0" y="11.7" width="39.800000000000004" height="1.2" fill="#3c302a" opacity="0.68"/><rect x="5.2" y="2.7" width="3.2" height="1.1" fill="#3a1f1f" opacity="0.8"/><rect x="4.2" y="7.6" width="1.8" height="1.4" fill="#a59c90" opacity="0.7"/><rect x="2.5" y="29.6" width="2" height="1.8" fill="#6a2a22" opacity="0.7"/><rect x="4.8" y="29.6" width="2.2" height="1.8" fill="#b07a56" opacity="0.7"/><rect x="7.4" y="29.6" width="1.8" height="1.8" fill="#6a2a22" opacity="0.7"/><rect x="10" y="20.5" width="6" height="1.1" fill="#4a3530" opacity="0.7"/><rect x="10" y="23" width="7" height="1.1" fill="#4e4a3a" opacity="0.7"/><rect x="16" y="22" width="3" height="2.2" fill="#8a4a3a" opacity="0.6"/><rect x="24" y="15.5" width="3" height="1.4" fill="#9a3f2f" opacity="0.6"/><rect x="30" y="17" width="3" height="1.1" fill="#8e3a2c" opacity="0.6"/><rect x="22" y="38" width="3" height="1" fill="#b06a48" opacity="0.6"/><rect x="28" y="33" width="4" height="1" fill="#a0563f" opacity="0.6"/><rect x="13" y="15" width="2" height="1.8" fill="#8e4434" opacity="0.6"/><rect x="34" y="26" width="2.5" height="1.1" fill="#4a2f2a" opacity="0.7"/></g></defs>
<rect width="693" height="388" fill="#74584f"/><use href="#bt" x="0.0" y="0.0"/><use href="#bt" x="39.6" y="0.0"/><use href="#bt" x="79.2" y="0.0"/><use href="#bt" x="118.8" y="0.0"/><use href="#bt" x="158.4" y="0.0"/><use href="#bt" x="198.0" y="0.0"/><use href="#bt" x="237.6" y="0.0"/><use href="#bt" x="277.2" y="0.0"/><use href="#bt" x="316.8" y="0.0"/><use href="#bt" x="356.4" y="0.0"/><use href="#bt" x="396.0" y="0.0"/><use href="#bt" x="435.6" y="0.0"/><use href="#bt" x="475.2" y="0.0"/><use href="#bt" x="514.8" y="0.0"/><use href="#bt" x="554.4" y="0.0"/><use href="#bt" x="594.0" y="0.0"/><use href="#bt" x="633.6" y="0.0"/><use href="#bt" x="673.2" y="0.0"/><use href="#bt" x="0.0" y="39.6"/><use href="#bt" x="39.6" y="39.6"/><use href="#bt" x="79.2" y="39.6"/><use href="#bt" x="118.8" y="39.6"/><use href="#bt" x="158.4" y="39.6"/><use href="#bt" x="198.0" y="39.6"/><use href="#bt" x="237.6" y="39.6"/><use href="#bt" x="277.2" y="39.6"/><use href="#bt" x="316.8" y="39.6"/><use href="#bt" x="356.4" y="39.6"/><use href="#bt" x="396.0" y="39.6"/><use href="#bt" x="435.6" y="39.6"/><use href="#bt" x="475.2" y="39.6"/><use href="#bt" x="514.8" y="39.6"/><use href="#bt" x="554.4" y="39.6"/><use href="#bt" x="594.0" y="39.6"/><use href="#bt" x="633.6" y="39.6"/><use href="#bt" x="673.2" y="39.6"/><use href="#bt" x="0.0" y="79.2"/><use href="#bt" x="39.6" y="79.2"/><use href="#bt" x="79.2" y="79.2"/><use href="#bt" x="118.8" y="79.2"/><use href="#bt" x="158.4" y="79.2"/><use href="#bt" x="198.0" y="79.2"/><use href="#bt" x="237.6" y="79.2"/><use href="#bt" x="277.2" y="79.2"/><use href="#bt" x="316.8" y="79.2"/><use href="#bt" x="356.4" y="79.2"/><use href="#bt" x="396.0" y="79.2"/><use href="#bt" x="435.6" y="79.2"/><use href="#bt" x="475.2" y="79.2"/><use href="#bt" x="514.8" y="79.2"/><use href="#bt" x="554.4" y="79.2"/><use href="#bt" x="594.0" y="79.2"/><use href="#bt" x="633.6" y="79.2"/><use href="#bt" x="673.2" y="79.2"/><use href="#bt" x="0.0" y="118.8"/><use href="#bt" x="39.6" y="118.8"/><use href="#bt" x="79.2" y="118.8"/><use href="#bt" x="118.8" y="118.8"/><use href="#bt" x="158.4" y="118.8"/><use href="#bt" x="198.0" y="118.8"/><use href="#bt" x="237.6" y="118.8"/><use href="#bt" x="277.2" y="118.8"/><use href="#bt" x="316.8" y="118.8"/><use href="#bt" x="356.4" y="118.8"/><use href="#bt" x="396.0" y="118.8"/><use href="#bt" x="435.6" y="118.8"/><use href="#bt" x="475.2" y="118.8"/><use href="#bt" x="514.8" y="118.8"/><use href="#bt" x="554.4" y="118.8"/><use href="#bt" x="594.0" y="118.8"/><use href="#bt" x="633.6" y="118.8"/><use href="#bt" x="673.2" y="118.8"/><use href="#bt" x="0.0" y="158.4"/><use href="#bt" x="39.6" y="158.4"/><use href="#bt" x="79.2" y="158.4"/><use href="#bt" x="118.8" y="158.4"/><use href="#bt" x="158.4" y="158.4"/><use href="#bt" x="198.0" y="158.4"/><use href="#bt" x="237.6" y="158.4"/><use href="#bt" x="277.2" y="158.4"/><use href="#bt" x="316.8" y="158.4"/><use href="#bt" x="356.4" y="158.4"/><use href="#bt" x="396.0" y="158.4"/><use href="#bt" x="435.6" y="158.4"/><use href="#bt" x="475.2" y="158.4"/><use href="#bt" x="514.8" y="158.4"/><use href="#bt" x="554.4" y="158.4"/><use href="#bt" x="594.0" y="158.4"/><use href="#bt" x="633.6" y="158.4"/><use href="#bt" x="673.2" y="158.4"/><use href="#bt" x="0.0" y="198.0"/><use href="#bt" x="39.6" y="198.0"/><use href="#bt" x="79.2" y="198.0"/><use href="#bt" x="118.8" y="198.0"/><use href="#bt" x="158.4" y="198.0"/><use href="#bt" x="198.0" y="198.0"/><use href="#bt" x="237.6" y="198.0"/><use href="#bt" x="277.2" y="198.0"/><use href="#bt" x="316.8" y="198.0"/><use href="#bt" x="356.4" y="198.0"/><use href="#bt" x="396.0" y="198.0"/><use href="#bt" x="435.6" y="198.0"/><use href="#bt" x="475.2" y="198.0"/><use href="#bt" x="514.8" y="198.0"/><use href="#bt" x="554.4" y="198.0"/><use href="#bt" x="594.0" y="198.0"/><use href="#bt" x="633.6" y="198.0"/><use href="#bt" x="673.2" y="198.0"/><use href="#bt" x="0.0" y="237.6"/><use href="#bt" x="39.6" y="237.6"/><use href="#bt" x="79.2" y="237.6"/><use href="#bt" x="118.8" y="237.6"/><use href="#bt" x="158.4" y="237.6"/><use href="#bt" x="198.0" y="237.6"/><use href="#bt" x="237.6" y="237.6"/><use href="#bt" x="277.2" y="237.6"/><use href="#bt" x="316.8" y="237.6"/><use href="#bt" x="356.4" y="237.6"/><use href="#bt" x="396.0" y="237.6"/><use href="#bt" x="435.6" y="237.6"/><use href="#bt" x="475.2" y="237.6"/><use href="#bt" x="514.8" y="237.6"/><use href="#bt" x="554.4" y="237.6"/><use href="#bt" x="594.0" y="237.6"/><use href="#bt" x="633.6" y="237.6"/><use href="#bt" x="673.2" y="237.6"/><use href="#bt" x="0.0" y="277.2"/><use href="#bt" x="39.6" y="277.2"/><use href="#bt" x="79.2" y="277.2"/><use href="#bt" x="118.8" y="277.2"/><use href="#bt" x="158.4" y="277.2"/><use href="#bt" x="198.0" y="277.2"/><use href="#bt" x="237.6" y="277.2"/><use href="#bt" x="277.2" y="277.2"/><use href="#bt" x="316.8" y="277.2"/><use href="#bt" x="356.4" y="277.2"/><use href="#bt" x="396.0" y="277.2"/><use href="#bt" x="435.6" y="277.2"/><use href="#bt" x="475.2" y="277.2"/><use href="#bt" x="514.8" y="277.2"/><use href="#bt" x="554.4" y="277.2"/><use href="#bt" x="594.0" y="277.2"/><use href="#bt" x="633.6" y="277.2"/><use href="#bt" x="673.2" y="277.2"/><use href="#bt" x="0.0" y="316.8"/><use href="#bt" x="39.6" y="316.8"/><use href="#bt" x="79.2" y="316.8"/><use href="#bt" x="118.8" y="316.8"/><use href="#bt" x="158.4" y="316.8"/><use href="#bt" x="198.0" y="316.8"/><use href="#bt" x="237.6" y="316.8"/><use href="#bt" x="277.2" y="316.8"/><use href="#bt" x="316.8" y="316.8"/><use href="#bt" x="356.4" y="316.8"/><use href="#bt" x="396.0" y="316.8"/><use href="#bt" x="435.6" y="316.8"/><use href="#bt" x="475.2" y="316.8"/><use href="#bt" x="514.8" y="316.8"/><use href="#bt" x="554.4" y="316.8"/><use href="#bt" x="594.0" y="316.8"/><use href="#bt" x="633.6" y="316.8"/><use href="#bt" x="673.2" y="316.8"/><use href="#bt" x="0.0" y="356.4"/><use href="#bt" x="39.6" y="356.4"/><use href="#bt" x="79.2" y="356.4"/><use href="#bt" x="118.8" y="356.4"/><use href="#bt" x="158.4" y="356.4"/><use href="#bt" x="198.0" y="356.4"/><use href="#bt" x="237.6" y="356.4"/><use href="#bt" x="277.2" y="356.4"/><use href="#bt" x="316.8" y="356.4"/><use href="#bt" x="356.4" y="356.4"/><use href="#bt" x="396.0" y="356.4"/><use href="#bt" x="435.6" y="356.4"/><use href="#bt" x="475.2" y="356.4"/><use href="#bt" x="514.8" y="356.4"/><use href="#bt" x="554.4" y="356.4"/><use href="#bt" x="594.0" y="356.4"/><use href="#bt" x="633.6" y="356.4"/><use href="#bt" x="673.2" y="356.4"/><use href="#bt" x="0.0" y="396.0"/><use href="#bt" x="39.6" y="396.0"/><use href="#bt" x="79.2" y="396.0"/><use href="#bt" x="118.8" y="396.0"/><use href="#bt" x="158.4" y="396.0"/><use href="#bt" x="198.0" y="396.0"/><use href="#bt" x="237.6" y="396.0"/><use href="#bt" x="277.2" y="396.0"/><use href="#bt" x="316.8" y="396.0"/><use href="#bt" x="356.4" y="396.0"/><use href="#bt" x="396.0" y="396.0"/><use href="#bt" x="435.6" y="396.0"/><use href="#bt" x="475.2" y="396.0"/><use href="#bt" x="514.8" y="396.0"/><use href="#bt" x="554.4" y="396.0"/><use href="#bt" x="594.0" y="396.0"/><use href="#bt" x="633.6" y="396.0"/><use href="#bt" x="673.2" y="396.0"/></svg>
<div class="abs" style="left:464px;top:652px;width:695px;height:1px;background:#3c3c3c"></div>
<div class="abs" style="left:464px;top:653px;width:695px;height:41px;background:#2b2b2b"></div>

<!-- manip buttons -->
<div class="btn" style="left:464px;top:663px;width:125px;height:26px;border-radius:5px;background:linear-gradient(#4a4a4a,#343434)"></div>
<div class="abs" style="left:558px;top:664px;width:30px;height:24px;background:#2d2d2d;border-radius:0 4px 4px 0"></div>
<div class="abs" style="left:495px;top:664px;width:1px;height:24px;background:#1a1a1a;box-shadow:31px 0 0 #1a1a1a,62px 0 0 #1a1a1a"></div>
<svg class="abs" style="left:465px;top:664px" width="124" height="25" viewBox="0 0 124 25">
<defs><linearGradient id="ig" x1="0" y1="0" x2="0" y2="1"><stop offset="0" stop-color="#c4c4c4"/><stop offset="1" stop-color="#8c8c8c"/></linearGradient></defs>
<path d="M10.5 4L11 20.5L15.5 15.6L22.2 15Z" fill="url(#ig)"/>
<g fill="#a6a6a6" transform="translate(0,-0.6)"><rect x="45.2" y="5" width="1.8" height="15"/><rect x="38.5" y="11.6" width="15" height="1.8"/><path d="M46.1 2L49.6 6.2H42.6Z"/><path d="M46.1 21.2L49.6 17H42.6Z"/><path d="M36.6 12.5L40.8 9V16Z"/><path d="M55.6 12.5L51.4 9V16Z"/></g>
<g fill="none" stroke="#a6a6a6" stroke-width="2.2"><path d="M71.3 8.9A6.6 6.6 0 0 1 83.6 11.4"/><path d="M82.7 15.5A6.6 6.6 0 0 1 70.4 13"/></g>
<path d="M79.8 10.8H87.8L83.9 15.6Z" fill="#a6a6a6"/><path d="M66.2 13.6H74.4L70.2 8.6Z" fill="#a6a6a6"/>
<g><circle cx="108.4" cy="12.4" r="7.3" fill="none" stroke="#6f9fe0" stroke-width="4" opacity="0.5"/><rect x="96.6" y="10.9" width="5" height="3.2" rx="1.4" fill="#6f9fe0" opacity="0.5"/><circle cx="108.4" cy="12.4" r="7.3" fill="none" stroke="#f2f7ff" stroke-width="2.1"/><rect x="97.3" y="11.4" width="4.2" height="2.1" rx="0.8" fill="#f2f7ff"/><circle cx="108.4" cy="12.4" r="1.6" fill="#a9cbf5"/></g>
</svg>
<!-- transport -->
<svg class="abs" style="left:676px;top:656px" width="268" height="38" viewBox="0 0 268 38">
<defs><linearGradient id="bg1" x1="0" y1="0" x2="0" y2="1"><stop offset="0" stop-color="#4b4b4b"/><stop offset="1" stop-color="#343434"/></linearGradient>
<linearGradient id="bg2" x1="0" y1="0" x2="0" y2="1"><stop offset="0" stop-color="#505050"/><stop offset="1" stop-color="#323232"/></linearGradient>
<linearGradient id="ic" x1="0" y1="0" x2="0" y2="1"><stop offset="0" stop-color="#c2c2c2"/><stop offset="1" stop-color="#8a8a8a"/></linearGradient></defs>
<path d="M7.5 7.5H97.5Q93 20 97.5 32.5H7.5Q3.5 32.5 3.5 28.500V11.5Q3.5 7.5 7.5 7.5Z" fill="url(#bg1)" stroke="#161616"/>
<path d="M34 8V32M66 8V32" stroke="#1a1a1a"/>
<rect x="101.500" y="3.5" width="64" height="32" rx="16" fill="url(#bg2)" stroke="#161616"/>
<path d="M134 4V35" stroke="#0c0c0c" stroke-width="1.3"/>
<path d="M169.500 7.5H258.500Q262.500 7.500 262.500 11.500V28.500Q262.500 32.500 258.500 32.500H169.500Q174 20 169.500 7.500Z" fill="url(#bg1)" stroke="#161616"/>
<path d="M200 8V32M231.500 8V32" stroke="#1a1a1a"/>
<g fill="url(#ic)">
<path d="M7.8 20.5L16.8 15V26Z"/><path d="M16 20.500L25 15V26Z"/>
<path d="M46 15H52V16.800H48.500V24.200H52V26H46Z"/>
<rect x="75" y="15" width="2.6" height="11"/><path d="M77.200 20.500L86 15V26Z"/>
<circle cx="118.700" cy="19.200" r="5.500"/>
<path d="M144 13.200L154.600 19.500L144 25.800Z"/>
<path d="M181 15L189.800 20.500L181 26Z"/><rect x="189.400" y="15" width="2.600" height="11"/>
<path d="M215 15H221V26H215V24.200H218.500V16.800H215Z"/>
<path d="M240 15L249 20.500L240 26Z"/><path d="M248.200 15L257.200 20.500L248.200 26Z"/>
</g></svg>
<!-- camera dropdown -->
<div class="btn" style="left:983px;top:663px;width:128px;height:26px;border-radius:5px;background:linear-gradient(#4a4a4a,#323232)"></div>
<div class="abs" style="left:1099px;top:664px;width:11px;height:24px;border-radius:0 4px 4px 0;background:linear-gradient(#505050,#3a3a3a)"></div>
<svg class="abs" style="left:1099px;top:664px" width="12" height="25"><path d="M2.6 11.400H8.600L5.600 14.600Z" fill="#9a9a9a"/></svg>
<div class="t" id="cam2" style="left:1026px;top:669px;color:#d0d0d0">camera1</div>
<div class="btn" style="left:1117px;top:663px;width:39px;height:26px;border-radius:5px"></div>
<svg class="abs" style="left:1117px;top:663px" width="40" height="27"><g transform="translate(14.500,13.300)"><g fill="url(#gg)"><path fill-rule="evenodd" d="M0-5.9A5.9 5.9 0 1 0 0 5.9A5.9 5.9 0 1 0 0-5.9ZM0-2.4A2.4 2.4 0 1 1 0 2.4A2.4 2.4 0 1 1 0-2.400Z"/><path d="M-1.05 -8.15L1.05 -8.15L1.25 -4.60L-1.25 -4.60ZM5.02 -6.51L6.51 -5.02L4.14 -2.37L2.37 -4.14ZM8.15 -1.05L8.15 1.05L4.60 1.25L4.60 -1.25ZM6.51 5.02L5.02 6.51L2.37 4.14L4.14 2.37ZM1.05 8.15L-1.05 8.15L-1.25 4.60L1.25 4.60ZM-5.02 6.51L-6.51 5.02L-4.14 2.37L-2.37 4.14ZM-8.15 1.05L-8.15 -1.05L-4.60 -1.25L-4.60 1.25ZM-6.51 -5.02L-5.02 -6.51L-2.37 -4.14L-4.14 -2.37Z" stroke="url(#gg)" stroke-width="0.8" stroke-linejoin="round"/><circle r="2.4" fill="#3a3a3a" opacity="0.35"/></g></g><path d="M29.600 12.600H35.200L32.400 15.600Z" fill="#6a6a6a"/></svg>

</div>
</body></html>
